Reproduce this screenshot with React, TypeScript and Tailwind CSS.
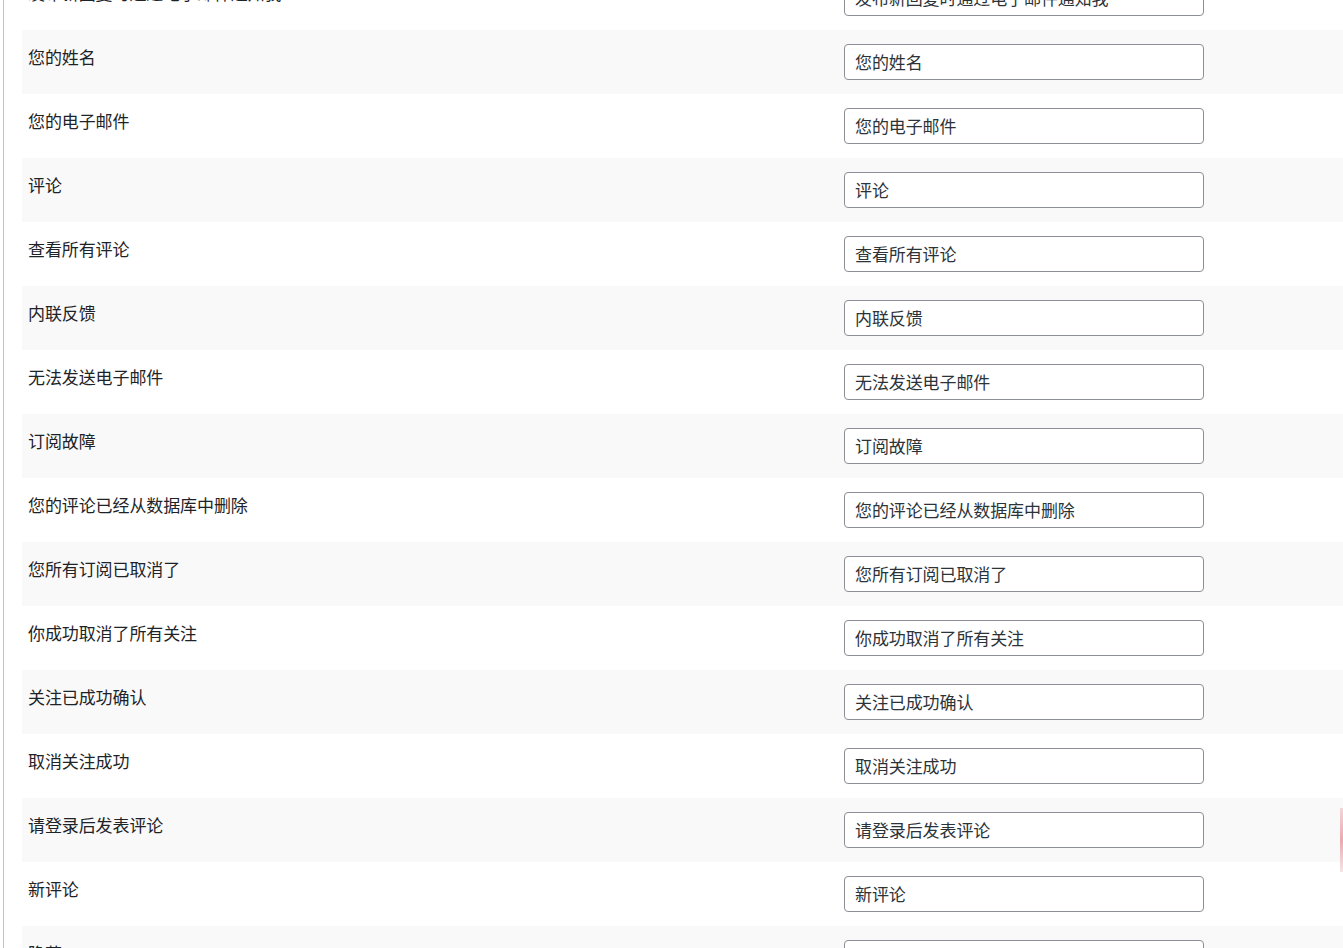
const rows = [
  "发布新回复时通过电子邮件通知我",
  "您的姓名",
  "您的电子邮件",
  "评论",
  "查看所有评论",
  "内联反馈",
  "无法发送电子邮件",
  "订阅故障",
  "您的评论已经从数据库中删除",
  "您所有订阅已取消了",
  "你成功取消了所有关注",
  "关注已成功确认",
  "取消关注成功",
  "请登录后发表评论",
  "新评论",
  "隐藏",
];

export default function App() {
  return (
    <div
      className="relative h-screen overflow-hidden bg-white"
      style={{ fontFamily: '"Noto Sans CJK SC", "Noto Sans", sans-serif' }}
    >
      <div className="ml-[3px] flex h-full flex-col border-l border-[#c3c4c7] pl-[18px]">
        <div className="-mt-[34px] flex flex-col">
          {rows.map((label, i) => (
            <div
              key={i}
              className={`flex h-16 shrink-0 ${i % 2 === 1 ? "bg-[#f9f9f9]" : "bg-white"}`}
            >
              <div className="w-[822px] shrink-0 pl-[6px] pt-[15px] text-[17px] leading-6 tracking-[-0.1px] text-[#1d2327]">
                {label}
              </div>
              <div className="flex items-center">
                <input
                  type="text"
                  defaultValue={label === "隐藏" ? "" : label}
                  className="h-9 w-[360px] rounded-[4px] border border-[#8c8f94] bg-white px-[10px] pb-[2px] text-[17px] tracking-[-0.1px] text-[#2c3338] outline-none"
                  style={{ fontFamily: '"Noto Sans CJK SC", "Noto Sans", sans-serif' }}
                />
              </div>
            </div>
          ))}
        </div>
      </div>
      <div className="absolute right-0 top-[808px] h-[64px] w-[3px] bg-gradient-to-b from-[#f3d6d8] via-[#e9a9b0] to-[#f6e4e5]" />
    </div>
  );
}
